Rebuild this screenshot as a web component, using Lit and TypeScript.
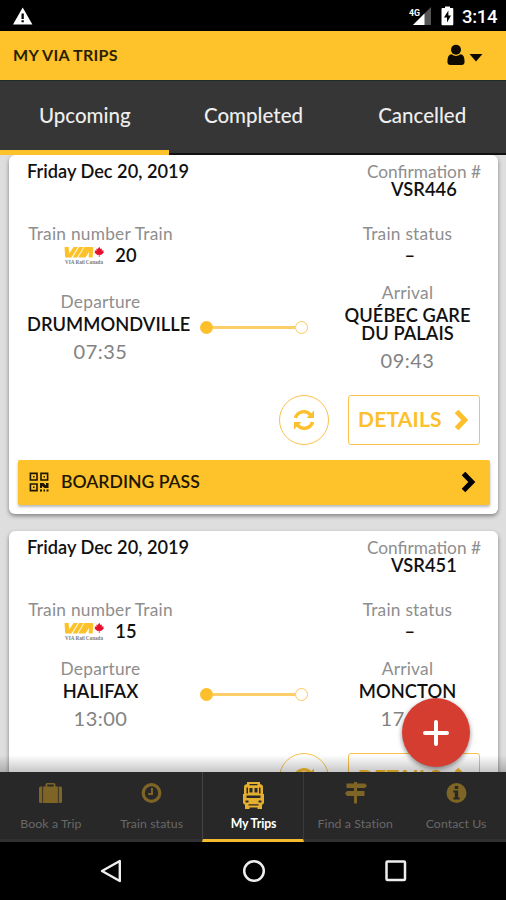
import { LitElement, html, css, svg } from "lit";
import { customElement, property } from "lit/decorators.js";
import { classMap } from "lit/directives/class-map.js";

interface Trip {
  date: string;
  code: string;
  train: string;
  from: string;
  fromTime: string;
  to: string[];
  toTime: string;
  pass: boolean;
}

const trips: Trip[] = [
  { date: "Friday Dec 20, 2019", code: "VSR446", train: "20", from: "DRUMMONDVILLE", fromTime: "07:35", to: ["QUÉBEC GARE", "DU PALAIS"], toTime: "09:43", pass: true },
  { date: "Friday Dec 20, 2019", code: "VSR451", train: "15", from: "HALIFAX", fromTime: "13:00", to: ["MONCTON"], toTime: "17:23", pass: false },
];

const chevron = html`<svg width="15" height="22" viewBox="0 0 15 22"><path d="M2.500 2.500 10.800 11 2.500 19.500" fill="none" stroke="currentColor" stroke-width="5"/></svg>`;

const viaLogo = html`<svg class="logo" width="42" height="20" viewBox="0 0 42 20">
  <g fill="#fdc229">
    <path d="M0.500 1H4.600L5.200 7.600 9.600 1H14L7.400 11.600H2.200Q1.200 11.600 1.100 10.400Z"/>
    <path d="M15 1H19.600L13.200 11.600H8.600Z"/>
    <path d="M20.400 1H28.200Q29.400 1 29.300 2.200L28.600 11.600H24.600L25 6 21.400 11.600H14.200Z"/>
  </g>
  <path fill="#e8112d" d="M35.200 0.800 36.600 3 38 2.400 37.700 4.600 39.800 4.400 39.200 6 40 6.600 37 9 35.600 8.800V11H34.800V8.800L33.400 9 30.400 6.600 31.200 6 30.600 4.400 32.700 4.600 32.400 2.400 33.800 3Z"/>
  <text x="1" y="18.200" font-family="Liberation Serif, serif" font-size="5.600" font-weight="bold" fill="#77797c" textLength="38" lengthAdjust="spacingAndGlyphs">VIA Rail Canada</text>
</svg>`;

const icons = {
  bag: svg`<path fill="currentColor" fill-rule="evenodd" d="M1.500 4.500H3.300V21H1.500Q0 21 0 19.400V6Q0 4.500 1.500 4.500ZM4.100 4.500H6.500V2.800Q6.500 1 8.300 1H14.700Q16.500 1 16.500 2.800V4.500H18.900V21H4.100ZM8.300 4.500H14.700V2.600H8.300ZM19.700 4.500H21.500Q23 4.500 23 6V19.400Q23 21 21.500 21H19.700Z"/>`,
  clock: svg`<circle cx="11.500" cy="11" r="8.300" fill="none" stroke="currentColor" stroke-width="3.200"/><path d="M12 6V12H8.200" fill="none" stroke="currentColor" stroke-width="2"/>`,
  train: svg`<path fill="currentColor" fill-rule="evenodd" d="M5 0H18V2Q21 2.500 21 5V12H22V21L20 23V27H15.500V25.500H7.500V27H3V23L1 21V12H2V5Q2 2.500 5 2ZM7.500 2V3.200H15.500V2ZM4.500 5.500V11.500H6V5.500ZM7.500 6V10.500H10.500V6ZM12.500 6V10.500H15.500V6ZM17 5.500V11.500H18.500V5.500ZM4.500 13.500V16H18.500V13.500ZM3.500 18.500V20.500H6.500V18.500ZM16.500 18.500V20.500H19.500V18.500ZM6.500 22.200V23.500H16.500V22.200Z"/>`,
  sign: svg`<path fill="currentColor" d="M10 0H13V1.500H21L23 3.700 21 6H13V9H20.500V14H13V21.500H10V14H3L1 11.500 3 9H10V6H2.500V1.500H10Z"/>`,
  info: svg`<path fill="currentColor" fill-rule="evenodd" d="M11.500 1A10 10 0 1 0 11.500 21 10 10 0 1 0 11.500 1ZM9.800 4H13.200V7H9.800ZM8.300 8.500H13.200V15.400H14.700V17.500H8.300V15.400H9.800V10.600H8.300Z"/>`,
};

@customElement("status-bar")
class StatusBar extends LitElement {
  static styles = css`
    :host { display: flex; height: 31px; background: #000; align-items: flex-start; padding: 0 9px 0 13px; box-sizing: border-box; font-family: Roboto, sans-serif; color: #fff; }
    .warn { margin-top: 7px; }
    .grow { flex: 1; }
    .signal { margin-top: 6px; }
    .battery { margin: 6px 0 0 9px; }
    .time { font-size: 18.500px; line-height: 22px; font-weight: 500; margin: 6px 0 0 8px; width: 35px; white-space: nowrap; letter-spacing: -0.300px; }
  `;
  render() {
    return html`
      <svg class="warn" width="20" height="18" viewBox="0 0 20 18"><path fill="#fff" fill-rule="evenodd" d="M9.700 0.400 19.400 17.600H0ZM8.500 6.500V12H10.800V6.500ZM8.500 13.200V15.300H10.800V13.200Z"/></svg>
      <div class="grow"></div>
      <svg class="signal" width="23" height="20" viewBox="0 0 23 20"><path fill="#555" d="M22 1V19H4Z"/><path fill="#fff" d="M15.500 7.500V19H4Z"/><text x="0" y="9.500" font-size="9.500" font-weight="bold" fill="#fff" font-family="Roboto, sans-serif" textLength="11" lengthAdjust="spacingAndGlyphs">4G</text></svg>
      <svg class="battery" width="13" height="20" viewBox="0 0 13 20"><path fill="#fff" fill-rule="evenodd" d="M4 0.500H9V2H11.300Q12.300 2 12.300 3V18.300Q12.300 19.300 11.300 19.300H1.500Q0.500 19.300 0.500 18.300V3Q0.500 2 1.500 2H4ZM7.400 4.500 3 11.500H6V16.500L10 9.500H7.400Z"/></svg>
      <div class="time">3:14</div>`;
  }
}

@customElement("trip-card")
class TripCard extends LitElement {
  @property({ attribute: false }) trip!: Trip;
  static styles = css`
    :host { display: block; background: #fff; border-radius: 6px; box-shadow: 0 2px 4px rgba(0,0,0,.42); }
    .body { padding: 7px 17px 0 18px; }
    .row { display: flex; justify-content: space-between; }
    .label { color: #8e8e8e; font-size: 17.300px; line-height: 20px; letter-spacing: .25px; white-space: nowrap; }
    .conf .label { letter-spacing: 0; }
    .date { font-size: 18.200px; line-height: 19px; font-weight: 600; color: #111; }
    .strong { font-size: 18.300px; line-height: 18px; font-weight: 600; color: #111; white-space: nowrap; letter-spacing: .05px; }
    .conf { text-align: center; height: 62px; }
    .conf .strong { line-height: 14px; }
    .col { width: 147px; text-align: center; }
    .train { display: flex; align-items: center; justify-content: center; gap: 9px; height: 22px; margin-bottom: 1px; }
    .train .logo { margin-top: 2px; }
    .journey { display: flex; align-items: center; justify-content: space-between; margin-top: 16px; }
    .when { color: #828282; font-size: 20px; line-height: 26px; margin-top: 5px; margin-bottom: 1px; letter-spacing: .5px; }
    .name { margin-top: 3px; }
    .track { flex: 1; display: flex; align-items: center; margin: 0 26px 2px; }
    .dot { width: 13px; height: 13px; box-sizing: border-box; border-radius: 50%; background: #fdc02c; }
    .dot.open { background: #fff; border: 1.500px solid #fbc860; }
    .rail { flex: 1; height: 3px; background: #fccf6b; }
    .actions { display: flex; justify-content: flex-end; gap: 19px; margin-top: 21px; padding-right: 1px; }
    .round, .details { box-sizing: border-box; height: 50px; border: 1px solid #fbc14a; color: #fdc02c; display: flex; align-items: center; }
    .round { width: 50px; border-radius: 50%; justify-content: center; }
    .details { width: 132px; border-radius: 3px; padding: 0 10px 0 9px; justify-content: space-between; font-size: 21px; font-weight: 700; letter-spacing: .2px; }
    .details span { margin-bottom: 3px; }
    .details svg { margin-bottom: 1px; }
    .pass { display: flex; align-items: center; margin: 15px 8px 0 9px; height: 45px; background: #fec22a; border-radius: 2px; box-shadow: 0 2px 3px rgba(0,0,0,.28); padding: 0 14px 0 11px; font-size: 17.600px; font-weight: 600; color: #1d1600; box-sizing: border-box; }
    .pass span { flex: 1; margin: 0 0 2px 12px; }
    .pass svg { margin-bottom: 2px; }
    .pass .go { color: #000; }
    .foot { height: 9px; }
    svg { display: block; flex: none; }
  `;
  render() {
    const t = this.trip;
    return html`
      <div class="body">
        <div class="row">
          <div class="date">${t.date}</div>
          <div class="conf"><div class="label">Confirmation #</div><div class="strong">${t.code}</div></div>
        </div>
        <div class="row">
          <div class="col"><div class="label">Train number Train</div><div class="train">${viaLogo}<span class="strong">${t.train}</span></div></div>
          <div class="col"><div class="label">Train status</div><div class="train"><span class="strong">&nbsp;–</span></div></div>
        </div>
        <div class="journey">
          <div class="col"><div class="label">Departure</div><div class="strong name">${t.from}</div><div class="when">${t.fromTime}</div></div>
          <div class="track"><div class="dot"></div><div class="rail"></div><div class="dot open"></div></div>
          <div class="col"><div class="label">Arrival</div><div class="name">${t.to.map((l) => html`<div class="strong">${l}</div>`)}</div><div class="when">${t.toTime}</div></div>
        </div>
        <div class="actions">
          <div class="round"><svg width="22" height="22" viewBox="0 0 22 22"><g fill="none" stroke="currentColor" stroke-width="3.400"><path d="M2.500 9A8.500 8.500 0 0 1 17.500 6"/><path d="M19.500 13A8.500 8.500 0 0 1 4.500 16"/></g><path fill="currentColor" d="M21 1.500V9H13.500ZM1 20.500V13H8.500Z"/></svg></div>
          <div class="details"><span>DETAILS</span>${chevron}</div>
        </div>
      </div>
      ${t.pass ? html`<div class="pass">
        <svg width="20" height="20" viewBox="0 0 20 20"><g fill="none" stroke="currentColor" stroke-width="1.600"><path d="M1.400 1.400H8V8H1.400ZM12 1.400H18.600V8H12ZM1.400 12H8V18.600H1.400Z"/></g><path fill="currentColor" d="M4 4H5.500V5.500H4ZM14.500 4H16V5.500H14.500ZM4 14.500H5.500V16H4ZM11 11H14.500L17 13.500V11H19.500V16H15.500L13 14V16H11ZM11 17.500H13V19.500H11ZM14.500 17.500H16V19.500H14.500ZM17.500 17.500H19.500V19.500H17.500Z"/></svg>
        <span>BOARDING PASS</span><div class="go">${chevron}</div></div>` : ""}
      <div class="foot"></div>`;
  }
}

@customElement("app-root")
class AppRoot extends LitElement {
  static styles = css`
    :host { display: flex; flex-direction: column; width: 506px; height: 900px; overflow: hidden; font-family: Lato, sans-serif; background: #000; position: relative; }
    .title { height: 49px; flex: none; background: #fec22a; display: flex; align-items: center; padding: 0 23px 1px 13px; box-sizing: border-box; font-size: 16px; font-weight: 700; color: #2a1f02; letter-spacing: .3px; }
    .title span { flex: 1; padding-bottom: 1px; }
    .title .user { margin-right: 4px; }
    .title .caret { margin-top: 6px; }
    .tabs { height: 75px; flex: none; display: flex; background: #363636; border-top: 1px solid #1c2a2a; box-sizing: border-box; }
    .tab { flex: 1; display: flex; align-items: center; justify-content: center; font-size: 20.500px; font-weight: 500; color: #eee; border-bottom: 2px solid #111; padding: 0 0 5px 1px; box-sizing: border-box; }
    .tab.on { border-bottom: 5px solid #fec22a; padding-bottom: 2px; }
    .list { height: 617px; flex: none; overflow: hidden; background: #dedede; padding: 0 8px 0 9px; box-sizing: border-box; display: flex; flex-direction: column; gap: 17px; position: relative; }
    .shade { position: absolute; left: 0; right: 0; bottom: 0; height: 17px; background: linear-gradient(rgba(0,0,0,0), rgba(0,0,0,.22)); }
    .fab { position: absolute; left: 402px; top: 698px; width: 68px; height: 69px; border-radius: 50%; background: #d53d31; box-shadow: 0 2px 5px rgba(0,0,0,.45); display: flex; align-items: center; justify-content: center; }
    .nav { height: 70px; flex: none; display: flex; background: #282828; }
    .item { flex: 1; box-sizing: border-box; display: flex; flex-direction: column; align-items: center; padding: 10px 0 0 1px; color: #7e6425; border-bottom: 3px solid #303030; }
    .item span { color: #686868; font-size: 12.300px; line-height: 16px; margin-top: 4px; white-space: nowrap; letter-spacing: .1px; }
    .item.on { color: #e5b02f; border-bottom-color: #f5bc30; border-left: 1px solid #444; border-right: 1px solid #3a3a3a; }
    .item.on span { color: #fff; font-weight: 700; letter-spacing: -.1px; }
    .sys { flex: 1; display: flex; align-items: center; justify-content: space-between; padding: 0 98px 0 99px; }
  `;
  render() {
    const items: [keyof typeof icons, string][] = [["bag", "Book a Trip"], ["clock", "Train status"], ["train", "My Trips"], ["sign", "Find a Station"], ["info", "Contact Us"]];
    return html`
      <status-bar></status-bar>
      <div class="title"><span>MY VIA TRIPS</span>
        <svg class="user" width="18" height="22" viewBox="0 0 18 22"><circle cx="9" cy="5.800" r="5" fill="#0d0a02"/><path fill="#0d0a02" d="M4.500 10.300Q9 13.500 13.500 10.300 17.600 10.500 17.600 17.500 17.600 21 14.500 21H3.500Q0.400 21 0.400 17.500 0.400 10.500 4.500 10.300Z"/></svg>
        <svg class="caret" width="14" height="8" viewBox="0 0 14 8"><path fill="#0d0a02" d="M0.500 0H13.500L7 7.600Z"/></svg>
      </div>
      <div class="tabs">${["Upcoming", "Completed", "Cancelled"].map((l, i) => html`<div class=${classMap({ tab: true, on: i === 0 })}>${l}</div>`)}</div>
      <div class="list">${trips.map((t) => html`<trip-card .trip=${t}></trip-card>`)}<div class="shade"></div></div>
      <div class="nav">${items.map(([icon, label]) => html`<div class=${classMap({ item: true, on: icon === "train" })}><svg width="23" height="30" viewBox="0 0 23 30">${icons[icon]}</svg><span>${label}</span></div>`)}</div>
      <div class="sys">
        <svg width="24" height="24" viewBox="0 0 24 24"><path d="M20.800 2V22L3 12Z" fill="none" stroke="#eee" stroke-width="2.400" stroke-linejoin="round"/></svg>
        <svg width="24" height="24" viewBox="0 0 24 24"><circle cx="12" cy="12" r="9.800" fill="none" stroke="#eee" stroke-width="2.500"/></svg>
        <svg width="24" height="24" viewBox="0 0 24 24"><rect x="2.500" y="2.500" width="18.500" height="18.500" rx="1" fill="none" stroke="#eee" stroke-width="2.500"/></svg>
      </div>
      <div class="fab"><svg width="26" height="26" viewBox="0 0 26 26"><path d="M13 2V24M2 13H24" stroke="#fff" stroke-width="4" stroke-linecap="round"/></svg></div>`;
  }
}
